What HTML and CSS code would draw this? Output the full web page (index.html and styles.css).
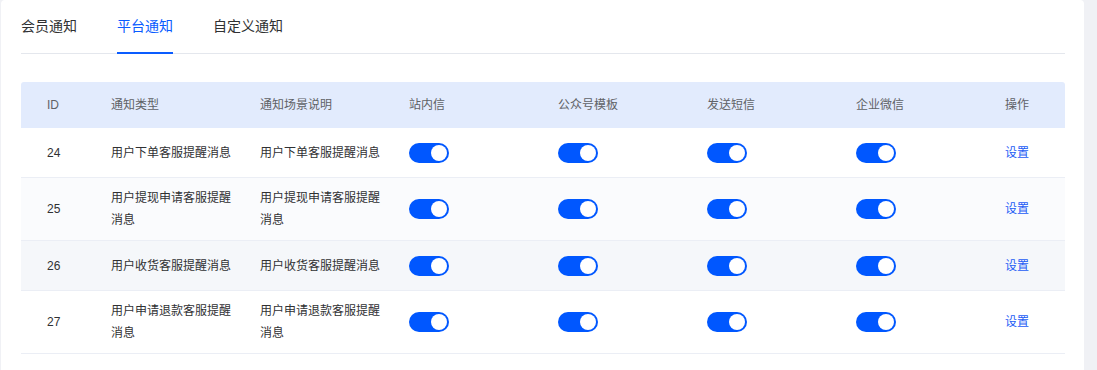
FILE: index.html
```html
<!DOCTYPE html>
<html lang="zh">
<head>
<meta charset="utf-8">
<title>平台通知</title>
<link rel="stylesheet" href="styles.css">
</head>
<body>
<div class="card">
  <div class="tabs">
    <div class="tab">会员通知</div>
    <div class="tab active">平台通知</div>
    <div class="tab">自定义通知</div>
  </div>
  <div class="table">
    <div class="row head">
      <div class="cell id">ID</div>
      <div class="cell">通知类型</div>
      <div class="cell">通知场景说明</div>
      <div class="cell">站内信</div>
      <div class="cell">公众号模板</div>
      <div class="cell">发送短信</div>
      <div class="cell">企业微信</div>
      <div class="cell">操作</div>
    </div>
    <div class="row">
      <div class="cell id">24</div>
      <div class="cell">用户下单客服提醒消息</div>
      <div class="cell">用户下单客服提醒消息</div>
      <div class="cell"><span class="switch"></span></div>
      <div class="cell"><span class="switch"></span></div>
      <div class="cell"><span class="switch"></span></div>
      <div class="cell"><span class="switch"></span></div>
      <div class="cell"><a class="link">设置</a></div>
    </div>
    <div class="row striped">
      <div class="cell id">25</div>
      <div class="cell">用户提现申请客服提醒消息</div>
      <div class="cell">用户提现申请客服提醒消息</div>
      <div class="cell"><span class="switch"></span></div>
      <div class="cell"><span class="switch"></span></div>
      <div class="cell"><span class="switch"></span></div>
      <div class="cell"><span class="switch"></span></div>
      <div class="cell"><a class="link">设置</a></div>
    </div>
    <div class="row hover">
      <div class="cell id">26</div>
      <div class="cell">用户收货客服提醒消息</div>
      <div class="cell">用户收货客服提醒消息</div>
      <div class="cell"><span class="switch"></span></div>
      <div class="cell"><span class="switch"></span></div>
      <div class="cell"><span class="switch"></span></div>
      <div class="cell"><span class="switch"></span></div>
      <div class="cell"><a class="link">设置</a></div>
    </div>
    <div class="row">
      <div class="cell id">27</div>
      <div class="cell">用户申请退款客服提醒消息</div>
      <div class="cell">用户申请退款客服提醒消息</div>
      <div class="cell"><span class="switch"></span></div>
      <div class="cell"><span class="switch"></span></div>
      <div class="cell"><span class="switch"></span></div>
      <div class="cell"><span class="switch"></span></div>
      <div class="cell"><a class="link">设置</a></div>
    </div>
  </div>
</div>
</body>
</html>
```
FILE: styles.css
```css
html, body {
  margin: 0;
  padding: 0;
  background: #f0f1f5;
  font-family: "Liberation Sans", "Noto Sans CJK SC", sans-serif;
}
body {
  padding: 0 13px 0 1px;
  height: 370px;
  overflow: hidden;
}
.card {
  background: #fff;
  border-radius: 4px;
  padding: 0 19px 40px 20px;
  min-height: 400px;
}
.tabs {
  display: flex;
  gap: 40px;
  border-bottom: 1px solid #e4e7ed;
  height: 53px;
}
.tab {
  font-size: 14px;
  color: #303133;
  line-height: 53px;
  height: 53px;
  box-sizing: border-box;
}
.tab.active {
  color: #0a5cff;
  border-bottom: 2px solid #0a5cff;
  height: 54px;
  margin-bottom: -1px;
}
.table {
  margin-top: 28px;
  font-size: 12px;
  color: #303133;
}
.row {
  display: grid;
  grid-template-columns: 90px repeat(6, 149px) 1fr;
  align-items: center;
  min-height: 49px;
  border-bottom: 1px solid #ebeef5;
}
.row.head {
  background: #e2ebfd;
  min-height: 46px;
  border-bottom: none;
  border-radius: 3px 3px 0 0;
  color: #5f6266;
}
.row.striped { background: #fafbfd; }
.row.hover { background: #f5f7fa; }
.cell {
  padding: 9px 18px 9px 0;
  line-height: 22px;
}
.cell.id { padding-left: 26px; }
.switch {
  display: block;
  width: 40px;
  height: 20px;
  border-radius: 10px;
  background: #0057ff;
  position: relative;
}
.switch::after {
  content: "";
  position: absolute;
  right: 2px;
  top: 2px;
  width: 16px;
  height: 16px;
  border-radius: 50%;
  background: #fff;
}
.link {
  color: #1c5cf5;
  cursor: pointer;
}
```
